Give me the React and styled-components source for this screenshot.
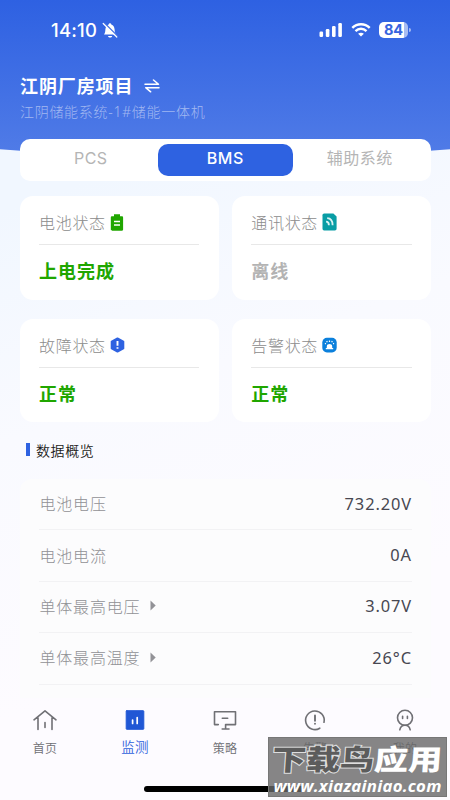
import styled, { createGlobalStyle } from 'styled-components'

const GlobalStyle = createGlobalStyle`
	* {
		box-sizing: border-box;
	}

	body {
		margin: 0;
		font-family: 'Noto Sans', 'Noto Sans CJK SC', sans-serif;
		background-color: #fbfaff;
	}
`

const Screen = styled.div`
	position: relative;
	display: flex;
	flex-direction: column;
	width: 450px;
	height: 800px;
	overflow: hidden;
	background: linear-gradient(160deg, #f1f7ff 22%, #f9faff 46%, #fdfbff 75%);
`

const HeaderBackground = styled.svg`
	position: absolute;
	top: 0;
	left: 0;
`

const StatusBar = styled.div`
	position: relative;
	display: flex;
	justify-content: space-between;
	align-items: center;
	height: 60px;
	padding: 0 39px 0 51px;
	color: #fff;
`

const StatusGroup = styled.div`
	display: flex;
	align-items: center;
	gap: ${({ $gap }) => $gap}px;
`

const Clock = styled.span`
	font: 500 18.5px/24px Inter, sans-serif;
	letter-spacing: 0.2px;
`

const Battery = styled.div`
	display: flex;
	align-items: center;
	justify-content: center;
	width: 29px;
	height: 16px;
	border-radius: 5px;
	color: #3764df;
	background: linear-gradient(90deg, #fff 85%, #a8bdf2 85%);
	font: 700 14.5px/16px Inter, sans-serif;
`

const BatteryTip = styled.i`
	width: 2px;
	height: 4px;
	margin-left: 1px;
	border-radius: 0 2px 2px 0;
	background-color: #a8bdf2;
`

const Heading = styled.header`
	position: relative;
	height: 79px;
	padding: 12px 20px 0;
	color: #fff;
`

const Project = styled.div`
	display: flex;
	align-items: center;
	gap: 11px;

	& h1 {
		margin: 0;
		font-size: 18px;
		font-weight: 700;
		line-height: 28px;
		letter-spacing: 0.9px;
	}
`

const DeviceName = styled.div`
	font-size: 14px;
	font-weight: 300;
	line-height: 23px;
	letter-spacing: 0.7px;
	color: #a2b8f1;
`

const Segments = styled.div`
	position: relative;
	display: flex;
	flex-shrink: 0;
	height: 42px;
	margin: 0 19px 0 19.5px;
	padding: 5px 4px;
	border-radius: 10px;
	background-color: #fff;
`

const Segment = styled.button`
	flex: 1;
	height: 32px;
	padding: 0 0 3px;
	border: 0;
	border-radius: 10px;
	font: ${({ $active }) => ($active ? 550 : 400)} 16px/29px Inter,
		'Noto Sans CJK SC', sans-serif;
	letter-spacing: 0.5px;
	color: ${({ $active }) => ($active ? '#fff' : '#b5b5b5')};
	background-color: ${({ $active }) => ($active ? '#2e62e1' : 'transparent')};
`

const Cards = styled.div`
	display: grid;
	grid-template-columns: 1fr 1fr;
	gap: 19px 13px;
	flex-shrink: 0;
	padding: 15px 19px 0 19.5px;
`

const Card = styled.div`
	height: 103.5px;
	padding: 14px 19.5px 0;
	border-radius: 13px;
	background-color: #fff;
`

const CardLabel = styled.div`
	display: flex;
	align-items: center;
	gap: 4px;
	height: 35px;
	padding-bottom: 10px;
	border-bottom: 1.5px solid #e8e8e8;
	font-size: 16px;
	font-weight: 300;
	letter-spacing: 0.7px;
	color: #8c8c8c;
`

const CardValue = styled.div`
	padding-top: 12px;
	font-size: 18px;
	font-weight: 700;
	line-height: 28px;
	letter-spacing: 1px;
	color: ${({ $muted }) => ($muted ? '#b3b3b3' : '#20a600')};
`

const SectionTitle = styled.h2`
	display: flex;
	align-items: center;
	gap: 6px;
	flex-shrink: 0;
	height: 57px;
	margin: 0;
	padding: 0 0 2px 26px;
	font-size: 14px;
	font-weight: 350;
	letter-spacing: 0.6px;
	color: #1c1c20;

	&::before {
		content: '';
		width: 4px;
		height: 13px;
		background-color: #2e62e1;
	}
`

const List = styled.div`
	height: 219px;
	flex-shrink: 0;
	margin: 0 19px 0 20px;
	padding: 0 19px 0 18.5px;
	border-radius: 12px 12px 0 0;
	background-color: #fcfcfd;
`

const Row = styled.div`
	display: flex;
	align-items: center;
	height: 51.4px;
	padding-bottom: 2px;
	border-bottom: 1px solid #f2f2f4;
	font-size: 16px;
	letter-spacing: 0.8px;
	color: #474751;

	& span {
		flex: 1;
		display: flex;
		align-items: center;
		gap: 10px;
		padding-left: 1px;
		font-weight: 300;
		color: #919195;
	}
`

const RowValue = styled.div`
	font-size: 16.4px;
	letter-spacing: 0.9px;
`

const TabBar = styled.nav`
	display: flex;
	height: 102px;
	padding-top: 10px;
`

const Tab = styled.div`
	display: flex;
	flex-direction: column;
	align-items: center;
	flex: 1;
	font-size: ${({ $active }) => ($active ? 13.5 : 12)}px;
	font-weight: 350;
	line-height: 20px;
	letter-spacing: 0.2px;
	color: ${({ $active }) => ($active ? '#2d60dc' : '#6e6e73')};

	& svg {
		margin-bottom: ${({ $active }) => ($active ? 5 : 7)}px;
	}
`

const HomeIndicator = styled.div`
	position: absolute;
	bottom: 8px;
	left: 144px;
	width: 161px;
	height: 6px;
	border-radius: 3px;
	background-color: #000;
`

const Watermark = styled.div`
	position: absolute;
	top: 737px;
	left: 268px;
	width: 179px;
	height: 60px;
	border: 1px solid #777;
	background-color: rgba(104, 104, 104, 0.8);
	color: #fff;
	text-align: center;
	white-space: nowrap;

	& strong {
		display: block;
		height: 38px;
		padding-top: 4px;
		font-size: 34px;
		font-weight: 900;
		line-height: 37px;
		transform: skewX(-4deg) scaleY(0.84);
	}

	& em {
		color: #5c5c5c;
		font-style: normal;
		-webkit-text-stroke: 2.4px #dedede;
		paint-order: stroke fill;
	}

	& small {
		display: flex;
		justify-content: center;
		font: italic 700 16.8px/20px 'Open Sans', sans-serif;
		letter-spacing: 0.25px;
	}
`

const BellOffIcon = () => (
	<svg width="16" height="17" viewBox="0 0 16 17">
		<path
			d="M2 12.6c1-1.1 1.2-2.4 1.4-5C3.6 4.7 4.8 3.2 6.5 2.7 6.7.7 9.2.7 9.5 2.7c1.8.5 2.9 2 3.1 4.9.2 2.6.4 3.9 1.6 5zM6 14h4.2c-.5 2-3.7 2-4.2 0z"
			fill="#fff"
		/>
		<path d="M2.4 1 15.6 14.2" stroke="#4370e3" strokeWidth="1.4" />
		<path d="M1.2 1.5 14.8 15" stroke="#fff" strokeWidth="1.2" strokeLinecap="round" />
	</svg>
)

const SignalIcon = () => (
	<svg width="24" height="16" viewBox="0 0 24 16" fill="#fff">
		<rect x="0.5" y="9.5" width="3.6" height="5.5" rx="1.2" />
		<rect x="6.8" y="7" width="3.6" height="8" rx="1.2" />
		<rect x="13" y="4" width="3.6" height="11" rx="1.2" />
		<rect x="19.3" y="1" width="3.6" height="14" rx="1.2" />
	</svg>
)

const WifiIcon = () => (
	<svg width="20" height="16" viewBox="0 0 20 16" fill="none" stroke="#fff" strokeWidth="2.5">
		<path d="M1.3 5.8c5-4.8 12.4-4.8 17.4 0" />
		<path d="M4.5 9.1c3.2-3 7.8-3 11 0" />
		<path d="m10 14.6-2.9-2.8c1.7-1.5 4.1-1.5 5.8 0z" fill="#fff" stroke="none" />
	</svg>
)

const SwapIcon = () => (
	<svg
		width="16"
		height="14"
		viewBox="0 0 16 14"
		fill="none"
		stroke="#fff"
		strokeWidth="1.5"
		strokeLinejoin="round"
		strokeLinecap="round"
	>
		<path d="M1 5.2h13.5L9.5 1" />
		<path d="M15 8.7H1.7l5 4.1" />
	</svg>
)

const BatteryIcon = () => (
	<svg width="14" height="17" viewBox="0 0 14 17">
		<path
			d="M4 .2h6v2h1.8c.8 0 1.3.5 1.3 1.2v12.1c0 .8-.5 1.2-1.3 1.2H2.1c-.8 0-1.3-.4-1.3-1.2V3.4c0-.7.5-1.2 1.3-1.2H4z"
			fill="#20a600"
		/>
		<path d="M4 7.4h6M4 11h6" stroke="#fff" strokeWidth="1.5" />
	</svg>
)

const LinkIcon = () => (
	<svg width="15" height="18" viewBox="0 0 15 18">
		<path
			d="M2.2.4h9.2l3.2 3v12.2c0 1.2-.7 2-1.8 2H2.2c-1.1 0-1.7-.8-1.7-2V2.3C.5 1.1 1.1.4 2.2.4z"
			fill="#089da5"
		/>
		<g fill="none" stroke="#d8f3f4" strokeWidth="1.8">
			<path d="M4.1 8.6c1.9 0 2.8 1.4 2.8 3.6" />
			<path d="M5.2 5.2c3.6.2 5.4 2.9 5.4 7" />
		</g>
	</svg>
)

const FaultIcon = () => (
	<svg width="15" height="16" viewBox="0 0 15 16">
		<path
			d="M7.5 1.4 13.3 4.6v6.8l-5.8 3.2-5.8-3.2V4.6z"
			fill="#2e62e1"
			stroke="#2e62e1"
			strokeWidth="2"
			strokeLinejoin="round"
		/>
		<path d="M7.5 4v4.8M7.5 10.2v1.6" stroke="#fff" strokeWidth="1.9" />
	</svg>
)

const AlarmIcon = () => (
	<svg width="15" height="16" viewBox="0 0 15 16">
		<rect x="0.3" y="0.8" width="14.4" height="14.6" rx="4.6" fill="#0b80dc" />
		<path d="M4.8 11V9.4c0-3.2 5.4-3.2 5.4 0V11h1v1.2H3.8V11z" fill="#fff" />
		<path
			d="M7.5 3.4v1.5M4.7 4.1l.6 1.2M10.3 4.1l-.6 1.2M3 6.3l.9.6M12 6.3l-.9.6"
			stroke="#fff"
			strokeWidth="1.2"
		/>
	</svg>
)

const ArrowIcon = () => (
	<svg width="6" height="11" viewBox="0 0 6 11">
		<path d="M.5.5 5.7 5.5.5 10.5z" fill="#929297" />
	</svg>
)

const TabIcon = ({ children }) => (
	<svg
		width="26"
		height="24"
		viewBox="0 0 26 24"
		fill="none"
		stroke="#707075"
		strokeWidth="1.6"
		strokeLinejoin="round"
		strokeLinecap="round"
	>
		{children}
	</svg>
)

const tabs = [
	{
		label: '首页',
		icon: <path d="M2 11.8 13 2.8l11 9M6 9.5v12M20 9.5v12M13 14.5v5" />,
	},
	{
		label: '监测',
		active: true,
		icon: (
			<>
				<rect x="4.2" y="2.7" width="17.6" height="18.6" rx="0.6" fill="#2057d5" stroke="#2057d5" strokeWidth="1" />
				<path d="M10.6 12v3.5M15.2 9.5v6" stroke="#fff" strokeWidth="1.7" />
			</>
		),
	},
	{
		label: '策略',
		icon: <path d="M6.3 16.6H2.5V3.7h21v12.9H13.6v4M10.2 21h6.8M10.3 10.3h5.4" />,
	},
	{
		label: '告警',
		icon: (
			<>
				<path d="M17.8 20.2A9.3 9.3 0 1 1 22 14.3" />
				<path d="M13 7.5v5.2M13 15.6v.2" strokeWidth="1.9" />
			</>
		),
	},
	{
		label: '我的',
		icon: (
			<>
				<circle cx="13" cy="9.8" r="7.5" />
				<path d="M10.6 8.2v2.2M15.4 8.2v2.2M7.8 21.8c.6-3.2 2.3-4.5 5.2-4.5s4.6 1.3 5.2 4.5" />
			</>
		),
	},
]

const cards = [
	{ label: '电池状态', value: '上电完成', Icon: BatteryIcon },
	{ label: '通讯状态', value: '离线', Icon: LinkIcon, muted: true },
	{ label: '故障状态', value: '正常', Icon: FaultIcon },
	{ label: '告警状态', value: '正常', Icon: AlarmIcon },
]

const rows = [
	{ label: '电池电压', value: '732.20V' },
	{ label: '电池电流', value: '0A' },
	{ label: '单体最高电压', value: '3.07V', expandable: true },
	{ label: '单体最高温度', value: '26°C', expandable: true },
]

export default function App() {
	return (
		<Screen>
			<GlobalStyle />
			<HeaderBackground width="450" height="170" viewBox="0 0 450 170">
				<defs>
					<linearGradient id="header" x1="0" y1="0" x2="0" y2="1">
						<stop offset="0" stopColor="#2e61e2" />
						<stop offset="1" stopColor="#517ce7" />
					</linearGradient>
				</defs>
				<path d="M0 0h450v149.2Q225 168 0 149.2z" fill="url(#header)" />
			</HeaderBackground>
			<StatusBar>
				<StatusGroup $gap={5}>
					<Clock>14:10</Clock>
					<BellOffIcon />
				</StatusGroup>
				<StatusGroup $gap={8}>
					<SignalIcon />
					<WifiIcon />
					<StatusGroup $gap={0}>
						<Battery>84</Battery>
						<BatteryTip />
					</StatusGroup>
				</StatusGroup>
			</StatusBar>
			<Heading>
				<Project>
					<h1>江阴厂房项目</h1>
					<SwapIcon />
				</Project>
				<DeviceName>江阴储能系统-1#储能一体机</DeviceName>
			</Heading>
			<Segments>
				<Segment>PCS</Segment>
				<Segment $active>BMS</Segment>
				<Segment>辅助系统</Segment>
			</Segments>
			<Cards>
				{cards.map(({ label, value, Icon, muted }) => (
					<Card key={label}>
						<CardLabel>
							{label}
							<Icon />
						</CardLabel>
						<CardValue $muted={muted}>{value}</CardValue>
					</Card>
				))}
			</Cards>
			<SectionTitle>数据概览</SectionTitle>
			<List>
				{rows.map(({ label, value, expandable }) => (
					<Row key={label}>
						<span>
							{label}
							{expandable && <ArrowIcon />}
						</span>
						<RowValue>{value}</RowValue>
					</Row>
				))}
			</List>
			<TabBar>
				{tabs.map(({ label, icon, active }) => (
					<Tab key={label} $active={active}>
						<TabIcon>{icon}</TabIcon>
						{label}
					</Tab>
				))}
			</TabBar>
			<HomeIndicator />
			<Watermark>
				<strong>
					<em>下载鸟</em>应用
				</strong>
				<small>www.xiazainiao.com</small>
			</Watermark>
		</Screen>
	)
}
